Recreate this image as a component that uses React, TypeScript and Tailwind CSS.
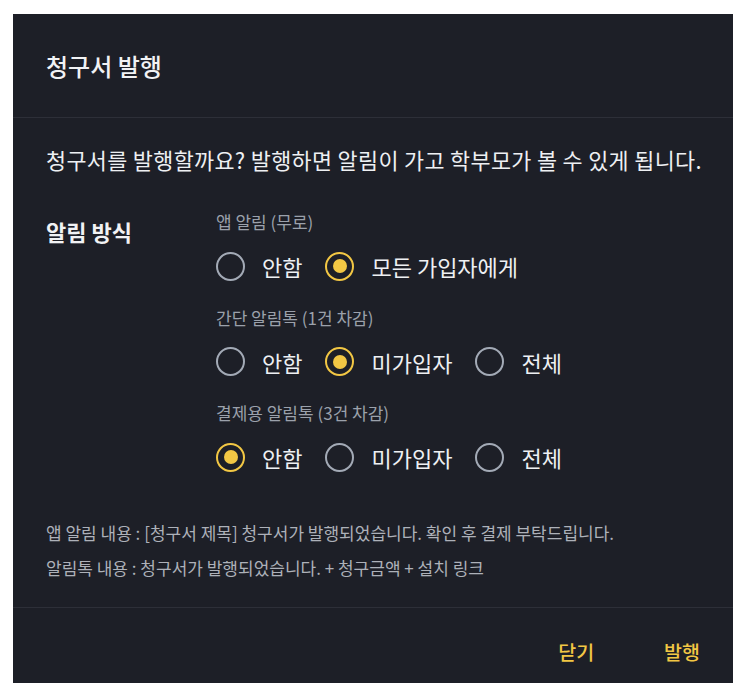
import React from 'react';

const font = { fontFamily: '"Noto Sans CJK KR", "Noto Sans", sans-serif' };

const Radio: React.FC<{ label: string; checked?: boolean }> = ({ label, checked = false }) => (
  <label className="flex items-center gap-[17px] mr-[23px] cursor-pointer">
    <span
      className={`flex items-center justify-center w-[29px] h-[29px] rounded-full border-[2.5px] ${
        checked ? 'border-[#f2c744]' : 'border-[#a3aab6]'
      }`}
    >
      {checked && <span className="w-[14px] h-[14px] rounded-full bg-[#f2c744]"></span>}
    </span>
    <span className="text-[22px] text-[#eef0f3] leading-none">{label}</span>
  </label>
);

const OptionGroup: React.FC<{ title: string; options: { label: string; checked?: boolean }[] }> = ({ title, options }) => (
  <div>
    <div className="text-[17px] text-[#9ba1ab] h-[26px] flex items-center">{title}</div>
    <div className="flex items-center h-[29px] mt-[16.5px] mb-[24px]">
      {options.map((o) => (
        <Radio key={o.label} label={o.label} checked={o.checked} />
      ))}
    </div>
  </div>
);

export default function App() {
  return (
    <div className="bg-white w-[750px] h-[696px] pt-[14px] pl-[13px]" style={font}>
      <div className="w-[720px] h-[669px] bg-[#1d1f27] flex flex-col">
        <div className="shrink-0 h-[104px] flex items-center px-[33px] border-b border-[#2d2f38]">
          <h2 className="text-[24px] font-medium text-[#f1f2f4]">청구서 발행</h2>
        </div>

        <div className="flex-1 min-h-0 overflow-hidden px-[33px] pt-[28px]">
          <p className="text-[21.8px] tracking-[0.35px] whitespace-nowrap text-[#eef0f3] leading-[28px]">
            청구서를 발행할까요? 발행하면 알림이 가고 학부모가 볼 수 있게 됩니다.
          </p>

          <div className="flex mt-[35px]">
            <div className="w-[170px] pt-[6px] text-[22px] font-bold text-[#f1f2f4]">알림 방식</div>
            <div className="flex-1">
              <OptionGroup
                title="앱 알림 (무로)"
                options={[{ label: '안함' }, { label: '모든 가입자에게', checked: true }]}
              />
              <OptionGroup
                title="간단 알림톡 (1건 차감)"
                options={[{ label: '안함' }, { label: '미가입자', checked: true }, { label: '전체' }]}
              />
              <OptionGroup
                title="결제용 알림톡 (3건 차감)"
                options={[{ label: '안함', checked: true }, { label: '미가입자' }, { label: '전체' }]}
              />
            </div>
          </div>

          <div className="mt-[19px] text-[17px] text-[#adb1b9] leading-[35px]">
            <p>앱 알림 내용 : [청구서 제목] 청구서가 발행되었습니다. 확인 후 결제 부탁드립니다.</p>
            <p>알림톡 내용 : 청구서가 발행되었습니다. + 청구금액 + 설치 링크</p>
          </div>
        </div>

        <div className="shrink-0 h-[76px] border-t border-[#2d2f38] flex items-center justify-end gap-[70px] pr-[33px] pt-[12px]">
          <button className="text-[19.5px] font-medium text-[#f2c744]">닫기</button>
          <button className="text-[19.5px] font-medium text-[#f2c744]">발행</button>
        </div>
      </div>
    </div>
  );
}
